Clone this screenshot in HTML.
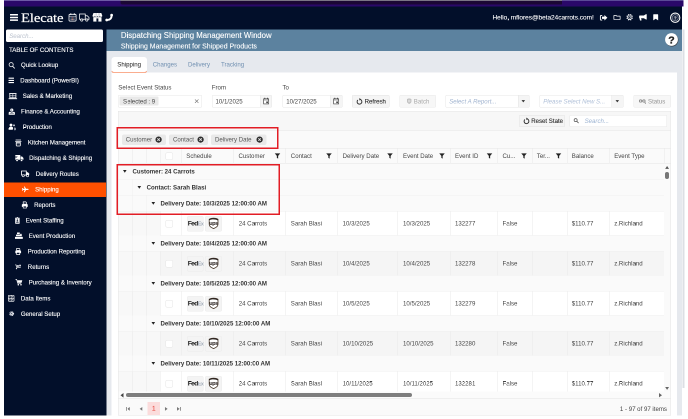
<!DOCTYPE html>
<html lang="en">
<head>
<meta charset="utf-8">
<title>Dispatching Shipping Management Window</title>
<style>
*{box-sizing:border-box;margin:0;padding:0}
html,body{width:688px;height:419px;overflow:hidden;background:#fff}
body{position:relative;font-family:"Liberation Sans",sans-serif;font-size:6.1px;color:#333;line-height:1}
#wrap{position:absolute;left:0;top:0;width:688px;height:419px;zoom:2;transform:scale(.5);transform-origin:0 0;will-change:transform;overflow:hidden;background:#fff}
.abs{position:absolute}
svg{overflow:visible}
.t{position:absolute;white-space:pre;line-height:1;transform:translateY(-50%)}
#logo{font-family:"Liberation Serif","DejaVu Serif",serif;font-size:13px;letter-spacing:-0.1px;color:#fff;-webkit-text-stroke:0.18px #fff;transform:translateY(-50%) scaleX(1.13);transform-origin:0 50%}
.nav{color:#fff;font-size:6.1px;-webkit-text-stroke:0.12px #fff}
.tab{font-size:6.1px;color:#6f8fb0}
.lbl{font-size:6.1px;color:#444}
.inp{position:absolute;background:#fff;border:0.5px solid #e6e6e6;border-radius:1px}
.btn{position:absolute;background:#f5f5f5;border:0.5px solid #e3e3e3;border-radius:1.2px}
.chip{position:absolute;background:#e9e9e9;border-radius:2px}
.hdr{font-size:6.1px;color:#444}
.cell{font-size:6.1px;color:#444}
.grp{font-size:6.1px;font-weight:bold;color:#333}
.vl{position:absolute;width:0.5px;background:#e8e8e8}
</style>
</head>
<body>
<div id="wrap">
<div class="abs" style="left:4.00px;top:0.00px;width:679.60px;height:6.60px;background:#2a0869"></div>
<div class="abs" style="left:120.40px;top:0.00px;width:441.60px;height:4.40px;background:#1b0734;border-radius:0 0 0 2px"></div>
<div class="abs" style="left:4.00px;top:0.00px;width:116.40px;height:0.80px;background:#6d5aa6"></div>
<div class="abs" style="left:120.40px;top:0.00px;width:441.60px;height:0.90px;background:#7b7585"></div>
<div class="abs" style="left:562.00px;top:0.00px;width:121.60px;height:0.80px;background:#5a4a96"></div>
<div class="abs" style="left:4.00px;top:6.50px;width:678.20px;height:23.00px;background:#020f2a"></div>
<div class="abs" style="left:4.00px;top:29.50px;width:102.60px;height:386.20px;background:#020f2a"></div>
<div class="abs" style="left:106.60px;top:29.50px;width:575.60px;height:386.20px;background:#e6e9ee"></div>
<div class="abs" style="left:106.60px;top:29.50px;width:575.60px;height:21.30px;background:#5c829f"></div>
<div class="abs" style="left:682.60px;top:29.50px;width:1.80px;height:358.50px;background:#dcdfe4"></div>
<svg class="abs" style="left:10.00px;top:14.00px" width="8" height="6.9" viewBox="0 0 8 6.9"><rect x="0" y="0" width="8" height="1.5" rx=".3" fill="#fff"/><rect x="0" y="2.7" width="8" height="1.500" rx=".3" fill="#fff"/><rect x="0" y="5.4" width="8" height="1.500" rx=".3" fill="#fff"/></svg>
<div class="t" id="logo" style="left:20.8px;top:18.2px">Elecate</div>
<svg class="abs" style="left:68.30px;top:13.10px" width="8.1" height="8.6" viewBox="0 0 16 17"><rect x="1" y="2.600" width="14" height="13.400" rx="1.800" fill="none" stroke="#fff" stroke-width="1.500"/><path d="M1 6.400h14" stroke="#e6e8ee" stroke-width="1.100"/><path d="M4.600 0.400v3.600M11.400 0.400v3.600" stroke="#fff" stroke-width="1.600"/><path d="M4 8.800h2.400v2.200h-2.400zM9.600 8.800h2.400v2.200h-2.400zM4 12h2.400v2.200h-2.400zM9.600 12h2.400v2.200h-2.400z" fill="#aab0c0"/><path d="M6.800 8.800h2.400v2.200h-2.400zM6.800 12h2.400v2.200h-2.400z" fill="#d98a7a"/></svg>
<svg class="abs" style="left:79.00px;top:13.40px" width="10.5" height="8.3" viewBox="0 0 21 16.600"><path d="M1 1h11.500v10.500h-11.500z" fill="none" stroke="#fff" stroke-width="1.500"/><path d="M12.500 4.500h4l3.500 3.600v3.400h-7.500" fill="none" stroke="#fff" stroke-width="1.500"/><circle cx="5.500" cy="13" r="2.300" fill="#020f2a" stroke="#fff" stroke-width="1.400"/><circle cx="15.600" cy="13" r="2.300" fill="#020f2a" stroke="#fff" stroke-width="1.400"/></svg>
<svg class="abs" style="left:92.30px;top:13.10px" width="9.8" height="8.6" viewBox="0 0 20 17.500"><path d="M2 0h16l2 5.500c0 1.500-1.200 2.300-2.500 2.300s-2.500-.8-2.500-2.300c0 1.500-1.200 2.300-2.500 2.300s-2.500-.8-2.500-2.300c0 1.500-1.200 2.300-2.500 2.300s-2.500-.8-2.500-2.300c0 1.500-1.200 2.300-2.500 2.300s-2.500-.8-2.500-2.300z" fill="#fff"/><path d="M1.600 8.500h16.800v9h-16.800z" fill="#fff"/><path d="M8 11h4v6.500h-4z" fill="#020f2a"/><path d="M5.200 0v5.500M8.400 0v5.500M11.600 0v5.500M14.800 0v5.500" stroke="#9aa0b2" stroke-width=".8"/></svg>
<svg class="abs" style="left:104.90px;top:13.40px" width="8.3" height="8.1" viewBox="0 0 16 16"><path d="M12.700 3.300C13.400 9.400 9.400 13.400 3.300 12.700" fill="none" stroke="#fff" stroke-width="3.800" stroke-linecap="round"/><circle cx="12.900" cy="3.200" r="2.700" fill="#fff"/><circle cx="3.200" cy="12.900" r="2.700" fill="#fff"/></svg>
<div class="t" style="left:492.5px;top:17.7px;font-size:6.46px;color:#fff;-webkit-text-stroke:0.1px #fff">Hello, mflores@beta24carrots.com!</div>
<svg class="abs" style="left:600.00px;top:14.90px" width="7.4" height="5.5" viewBox="0 0 14.800 11"><path d="M4.400 0.900h-2.400c-.7 0-1.200.5-1.200 1.200v6.800c0 .7.500 1.200 1.200 1.200h2.400" fill="none" stroke="#fff" stroke-width="1.800"/><path d="M8.800 0l6 5.500-6 5.500v-3.200h-4.800v-4.600h4.800z" fill="#fff"/></svg>
<svg class="abs" style="left:613.50px;top:15.10px" width="7" height="4.9" viewBox="0 0 15 10.500"><path d="M0.800 1.500c0-.4.300-.7.700-.7h4l1.500 1.600h6.500c.4 0 .7.300.7.700v6c0 .4-.3.700-.7.700h-12c-.4 0-.7-.3-.7-.700z" fill="none" stroke="#fff" stroke-width="1.500"/></svg>
<svg class="abs" style="left:626.10px;top:14.20px" width="7.3" height="6.5" viewBox="0 0 14.600 13"><path d="M11.55 8.26L13.40 9.03M9.06 10.75L9.83 12.60M5.54 10.75L4.77 12.60M3.05 8.26L1.20 9.03M3.05 4.74L1.20 3.97M5.54 2.25L4.77 0.40M9.06 2.25L9.83 0.40M11.55 4.74L13.40 3.97" stroke="#e4e6ec" stroke-width="2.300"/><circle cx="7.300" cy="6.500" r="4.500" fill="#020f2a" stroke="#fff" stroke-width="1.300"/><circle cx="7.300" cy="6.500" r="2" fill="none" stroke="#e8eaf0" stroke-width="1.100"/></svg>
<svg class="abs" style="left:639.00px;top:14.20px" width="8.4" height="6.7" viewBox="0 0 16.500 13.500"><path d="M14 0.300c.6-.4 1.300 0 1.300.700v9.500c0 .7-.7 1.100-1.300.7l-4.500-2.700h-5.500l.9 3.700c.1.500-.2.900-.7.900h-1.700c-.4 0-.7-.2-.8-.6l-1-4.200c-.5-.3-.7-.800-.7-1.300v-2.500c0-.8.600-1.500 1.500-1.500h8z" fill="#fff"/></svg>
<svg class="abs" style="left:653.10px;top:14.00px" width="5.4" height="6.7" viewBox="0 0 11 12.400"><path d="M0.500 1.200c0-.7.500-1.200 1.200-1.200h7.600c.7 0 1.200.5 1.200 1.200v11.200l-5-3.300-5 3.300z" fill="#fff"/></svg>
<svg class="abs" style="left:669.90px;top:12.30px" width="10.4" height="10.4" viewBox="0 0 20.800 20.800"><circle cx="10.400" cy="10.400" r="9.300" fill="none" stroke="#fff" stroke-width="2.100"/><circle cx="10.400" cy="10.400" r="6.200" fill="#1a2540" stroke="#d8dbe3" stroke-width=".9"/><text x="10.400" y="13.700" text-anchor="middle" font-family="Liberation Sans, sans-serif" font-weight="bold" font-size="9" fill="#fff">?</text></svg>
<svg class="abs" style="left:664.80px;top:32.80px" width="13" height="13" viewBox="0 0 26 26"><circle cx="13.900" cy="14.100" r="12.800" fill="#2a2320" opacity=".75"/><circle cx="13" cy="13" r="12.800" fill="#fff"/><text x="13" y="20.600" text-anchor="middle" font-family="Liberation Sans, sans-serif" font-weight="bold" font-size="21" fill="#222" stroke="#222" stroke-width=".6">?</text></svg>
<div class="abs" style="left:5.80px;top:29.60px;width:97.20px;height:12.40px;background:#fff;border-radius:1.600px"></div>
<div class="t" style="left:9.2px;top:36px;font-size:6.100px;font-style:italic;color:#b9c0cc">Search...</div>
<div class="t nav" style="left:9px;top:50px;font-size:6.120px">TABLE OF CONTENTS</div>
<div class="abs" style="left:4.00px;top:182.40px;width:101.80px;height:14.80px;background:#ff5000"></div>
<div class="t nav" style="left:21px;top:65.2px">Quick Lookup</div>
<div class="t nav" style="left:20.3px;top:80.7px">Dashboard (PowerBI)</div>
<div class="t nav" style="left:22.7px;top:96.2px">Sales &amp; Marketing</div>
<div class="t nav" style="left:21px;top:111.7px">Finance &amp; Accounting</div>
<div class="t nav" style="left:22.7px;top:127.2px">Production</div>
<div class="t nav" style="left:27.9px;top:142.7px">Kitchen Management</div>
<div class="t nav" style="left:29.1px;top:158.2px">Dispatching &amp; Shipping</div>
<div class="t nav" style="left:35.8px;top:173.8px">Delivery Routes</div>
<div class="t nav" style="left:35.1px;top:189.6px">Shipping</div>
<div class="t nav" style="left:34.1px;top:205.1px">Reports</div>
<div class="t nav" style="left:25.8px;top:220.7px">Event Staffing</div>
<div class="t nav" style="left:28.7px;top:236.1px">Event Production</div>
<div class="t nav" style="left:27.8px;top:251.6px">Production Reporting</div>
<div class="t nav" style="left:27.8px;top:267.1px">Returns</div>
<div class="t nav" style="left:28.7px;top:282.6px">Purchasing &amp; Inventory</div>
<div class="t nav" style="left:20.9px;top:298.3px">Data Items</div>
<div class="t nav" style="left:20.9px;top:313.8px">General Setup</div>
<svg class="abs" style="left:8.40px;top:61.80px" width="6.4" height="6.6" viewBox="0 0 13 13.400"><circle cx="5.400" cy="5.400" r="4.200" fill="none" stroke="#fff" stroke-width="1.500"/><path d="M8.500 8.700l3.700 3.900" stroke="#fff" stroke-width="1.700" stroke-linecap="round"/></svg>
<svg class="abs" style="left:8.70px;top:77.70px" width="5.5" height="5.8" viewBox="0 0 11 11.600"><rect x="0" y="0.300" width="11" height="2.200" rx=".4" fill="#fff"/><rect x="0" y="4.700" width="11" height="2.200" rx=".4" fill="#fff"/><rect x="0" y="9.100" width="11" height="2.200" rx=".4" fill="#fff"/></svg>
<svg class="abs" style="left:8.30px;top:92.90px" width="8.7" height="6.3" viewBox="0 0 17.400 12.600"><path d="M1.400 1h14.600" stroke="#fff" stroke-width="1.800"/><path d="M2.600 2v7.600h12.200v-7.600" fill="none" stroke="#fff" stroke-width="1.600"/><path d="M8.700 2v7.600M2.600 5.600h12.200" stroke="#e6e8ee" stroke-width="1.200"/><path d="M0.200 11.400h17" stroke="#fff" stroke-width="1.900"/></svg>
<svg class="abs" style="left:8.50px;top:108.70px" width="6.6" height="6.3" viewBox="0 0 13 12.600"><circle cx="6.500" cy="3.200" r="3.100" fill="#fff"/><path d="M6.500 1.400v3.600" stroke="#5a6480" stroke-width="1"/><path d="M0.300 12.400v-3.800c0-1.400 1.200-2.200 2.600-2.200l3.600 1.800 3.600-1.800c1.400 0 2.600.800 2.600 2.200v3.800z" fill="#fff"/><path d="M2.400 9.400h8.200" stroke="#020f2a" stroke-width=".9"/></svg>
<svg class="abs" style="left:8.50px;top:123.70px" width="8" height="6.8" viewBox="0 0 16 13.600"><circle cx="5" cy="3" r="2.800" fill="#fff"/><path d="M0.200 12.600v-2.400c0-2.100 1.500-3.600 3.500-3.600h2.600c1.600 0 2.700.8 3.200 2l-1 3.600c-.1.200-.2.400-.5.400z" fill="#fff"/><circle cx="11" cy="3.700" r="1.900" fill="#cfd3dc"/><path d="M11.600 7.500v6M14.400 7.800v5.400" stroke="#dfe2ea" stroke-width="1.200"/></svg>
<svg class="abs" style="left:14.90px;top:139.30px" width="6.6" height="7" viewBox="0 0 13 14"><path d="M1.800 1h9.400" stroke="#fff" stroke-width="1.700" stroke-linecap="round"/><path d="M0.800 3.800h11.400" stroke="#fff" stroke-width="1.500" stroke-linecap="round"/><path d="M2.400 6h8.200v5.600c0 .8-.6 1.400-1.400 1.400h-5.400c-.8 0-1.400-.6-1.400-1.400z" fill="none" stroke="#fff" stroke-width="1.600"/><path d="M2.400 8.700h8.200" stroke="#fff" stroke-width="1.100"/></svg>
<svg class="abs" style="left:14.80px;top:154.80px" width="8.6" height="6.8" viewBox="0 0 17 13.600"><path d="M0.500 0.600c0-.3.300-.6.600-.6h8.800c.3 0 .6.300.6.600v8.900h-10z" fill="#fff"/><path d="M11.300 3h2.800l2.700 2.900v3.600h-5.500z" fill="#fff"/><circle cx="4" cy="10.700" r="2.200" fill="#fff" stroke="#020f2a" stroke-width=".9"/><circle cx="13" cy="10.700" r="2.200" fill="#fff" stroke="#020f2a" stroke-width=".9"/><path d="M0 3h5M0 5.400h4" stroke="#020f2a" stroke-width=".9"/></svg>
<svg class="abs" style="left:21.00px;top:170.40px" width="8.6" height="6.6" viewBox="0 0 17 13.200"><path d="M1 1h9.500v8.200h-9.500z" fill="none" stroke="#fff" stroke-width="1.700"/><path d="M10.500 3.500h3.300l2.500 2.800v2.900h-5.800z" fill="#fff"/><circle cx="4.300" cy="10.500" r="2.100" fill="#020f2a" stroke="#fff" stroke-width="1.300"/><circle cx="13" cy="10.500" r="2.100" fill="#020f2a" stroke="#fff" stroke-width="1.300"/></svg>
<svg class="abs" style="left:21.50px;top:186.60px" width="7.2" height="5.8" viewBox="0 0 14.400 11.600"><path d="M14.400 5.800c0 .7-1.400 1.200-2.400 1.200h-2.900l-2.700 4.600h-1.600l1.400-4.600h-2.800l-1.200 1.500h-1.300l.8-2.700-.8-2.700h1.300l1.200 1.500h2.800l-1.400-4.600h1.600l2.700 4.600h2.900c1 0 2.400.5 2.400 1.200z" fill="#fff"/></svg>
<svg class="abs" style="left:21.60px;top:201.50px" width="6.6" height="7" viewBox="0 0 13 14"><path d="M3.300 0.800h5.200l1.400 1.400v3h-6.600z" fill="none" stroke="#fff" stroke-width="1.400"/><path d="M0.600 6.600c0-.8.600-1.400 1.400-1.400h9c.8 0 1.400.6 1.400 1.400v4.200h-11.800z" fill="#fff"/><path d="M3.300 9.200h6.400v4h-6.400z" fill="#020f2a" stroke="#fff" stroke-width="1.300"/></svg>
<svg class="abs" style="left:14.90px;top:217.20px" width="4.8" height="6.8" viewBox="0 0 9.600 13.600"><path d="M0.400 2.200c0-.5.400-.9.900-.9h7c.5 0 .9.400.9.900v10.500c0 .5-.4.900-.9.900h-7c-.5 0-.9-.4-.9-.900z" fill="#fff"/><rect x="3" y="0" width="3.600" height="2.600" rx=".6" fill="#fff" stroke="#020f2a" stroke-width=".7"/><circle cx="4.800" cy="6.200" r="1.500" fill="#020f2a"/><path d="M2.200 11.200c0-1.500 1.100-2.400 2.600-2.400s2.600.9 2.600 2.400z" fill="#020f2a"/></svg>
<svg class="abs" style="left:15.00px;top:232.70px" width="7.8" height="6.4" viewBox="0 0 15.600 12.800"><path d="M4 0h5.500v3.200h-5.500z" fill="#fff"/><path d="M10.300 2.600h3v2.500h-3z" fill="#dfe2ea"/><path d="M2 4.200h11.600v3.300h-11.600z" fill="#fff"/><path d="M0 8.800h15.600v3.600c0 .2-.2.400-.4.400h-14.800c-.2 0-.4-.2-.4-.4z" fill="#fff"/></svg>
<svg class="abs" style="left:15.00px;top:248.10px" width="6.4" height="6.8" viewBox="0 0 13 14"><path d="M3.300 0.800h5.200l1.400 1.400v3h-6.600z" fill="none" stroke="#fff" stroke-width="1.400"/><path d="M0.600 6.600c0-.8.600-1.400 1.400-1.400h9c.8 0 1.400.6 1.400 1.400v4.200h-11.800z" fill="#fff"/><path d="M3.300 9.200h6.400v4h-6.400z" fill="#020f2a" stroke="#fff" stroke-width="1.300"/></svg>
<svg class="abs" style="left:15.20px;top:264.60px" width="6.2" height="4.8" viewBox="0 0 12.400 9.600"><path d="M0 0.800h2.200l1.600 5.600h7.600" fill="none" stroke="#fff" stroke-width="1.300"/><path d="M4.200 1.200h3.400v3.600h-3.400zM8.400 0.400h3.400v3.300h-3.400z" fill="#e6e8ee"/><circle cx="3" cy="8.200" r="1.200" fill="#fff"/></svg>
<svg class="abs" style="left:15.30px;top:279.20px" width="7" height="6.6" viewBox="0 0 14 13.200"><path d="M0 0.900h2.300l2.200 7.600h7" fill="none" stroke="#fff" stroke-width="1.500"/><path d="M3.600 2.400h10l-1.400 5h-7.200z" fill="#fff"/><circle cx="5.600" cy="11.400" r="1.500" fill="#fff"/><circle cx="11" cy="11.400" r="1.500" fill="#fff"/></svg>
<svg class="abs" style="left:8.10px;top:295.00px" width="6.4" height="6.6" viewBox="0 0 12.800 13.200"><rect x=".7" y=".7" width="11.400" height="11.800" rx="1.200" fill="none" stroke="#fff" stroke-width="1.300"/><path d="M6.400 .7v11.800M.7 6.600h11.400" stroke="#fff" stroke-width="1.100"/><circle cx="3.600" cy="3.700" r="1.100" fill="#fff"/><circle cx="9.300" cy="3.700" r="1.100" fill="#fff"/><circle cx="3.600" cy="9.500" r="1.100" fill="#fff"/><circle cx="9.300" cy="9.500" r="1.100" fill="#fff"/></svg>
<svg class="abs" style="left:8.90px;top:311.00px" width="5.4" height="5.4" viewBox="0 0 9.200 9.200"><circle cx="4.600" cy="4.600" r="3" fill="none" stroke="#e6e8ee" stroke-width="2.200" stroke-dasharray="1.600 .8"/><circle cx="4.600" cy="4.600" r="2.200" fill="#e6e8ee"/><circle cx="4.600" cy="4.600" r=".9" fill="#020f2a"/></svg>
<div class="t" style="left:120.9px;top:35.4px;font-size:7.790px;color:#fff;-webkit-text-stroke:0.1px #fff">Dispatching Shipping Management Window</div>
<div class="t" style="left:120.9px;top:46.3px;font-size:6.930px;color:#fff;-webkit-text-stroke:0.1px #fff">Shipping Management for Shipped Products</div>
<div class="abs" style="left:111.60px;top:57.20px;width:35.40px;height:15.70px;background:#fff;border-radius:3px 3px 2.500px 2.500px;border-bottom:1.300px solid #f55a1f"></div>
<div class="t" style="left:117.3px;top:64.6px;font-size:6.100px;color:#222">Shipping</div>
<div class="t tab" style="left:152.7px;top:64.6px">Changes</div>
<div class="t tab" style="left:188px;top:64.6px">Delivery</div>
<div class="t tab" style="left:221px;top:64.6px">Tracking</div>
<div class="abs" style="left:111.60px;top:72.40px;width:565.40px;height:343.30px;background:#fff"></div>
<div class="t lbl" style="left:118.3px;top:87.5px">Select Event Status</div>
<div class="t lbl" style="left:211.8px;top:87.5px">From</div>
<div class="t lbl" style="left:282.5px;top:87.5px">To</div>
<div class="inp" style="left:118.00px;top:95.00px;width:84.00px;height:12.30px;"></div>
<div class="chip" style="left:119.60px;top:96.50px;width:38.80px;height:9.20px;border-radius:1px"></div>
<div class="t cell" style="left:123px;top:101.3px">Selected : 9</div>
<svg class="abs" style="left:194.40px;top:99.20px" width="4.4" height="4.4" viewBox="0 0 10 10"><path d="M1 1L9 9M9 1L1 9" stroke="#666" stroke-width="1.300" fill="none"/></svg>
<div class="inp" style="left:211.80px;top:95.10px;width:60.40px;height:12.30px;"></div>
<div class="abs" style="left:260.20px;top:95.60px;width:11.50px;height:11.30px;background:#f5f5f5;border-left:0.500px solid #e6e6e6"></div>
<div class="t cell" style="left:215.5px;top:101.6px">10/1/2025</div>
<svg class="abs" style="left:262.90px;top:97.60px" width="6.3" height="6.9" viewBox="0 0 12.600 13.800"><path d="M1.300 2.600h10v10.200h-10z" fill="#fff" stroke="#3a3a3a" stroke-width="1.250"/><path d="M1.300 5h10" stroke="#3a3a3a" stroke-width="1"/><path d="M3.600 0.400v2.800M9 0.400v2.800" stroke="#333" stroke-width="1.500"/><rect x="6.600" y="8" width="3.200" height="3.200" fill="#333"/></svg>
<div class="inp" style="left:282.30px;top:95.10px;width:60.40px;height:12.30px;"></div>
<div class="abs" style="left:330.20px;top:95.60px;width:12.00px;height:11.30px;background:#f5f5f5;border-left:0.500px solid #e6e6e6"></div>
<div class="t cell" style="left:286.2px;top:101.6px">10/27/2025</div>
<svg class="abs" style="left:333.10px;top:97.60px" width="6.3" height="6.9" viewBox="0 0 12.600 13.800"><path d="M1.300 2.600h10v10.200h-10z" fill="#fff" stroke="#3a3a3a" stroke-width="1.250"/><path d="M1.300 5h10" stroke="#3a3a3a" stroke-width="1"/><path d="M3.600 0.400v2.800M9 0.400v2.800" stroke="#333" stroke-width="1.500"/><rect x="6.600" y="8" width="3.200" height="3.200" fill="#333"/></svg>
<div class="btn" style="left:352.20px;top:95.00px;width:37.20px;height:12.40px;"></div>
<svg class="abs" style="left:355.80px;top:97.90px" width="7" height="7.2" viewBox="0 0 14 14.400"><path d="M7 2.600a4.800 4.800 0 1 1-3.400 1.400" fill="none" stroke="#333" stroke-width="2"/><path d="M6.600 0v5.200l3.200-2.600z" fill="#333"/></svg>
<div class="t" style="left:364.6px;top:101.4px;font-size:6.100px;color:#2a2a2a;-webkit-text-stroke:0.1px #2a2a2a">Refresh</div>
<div class="btn" style="left:399.30px;top:94.80px;width:36.80px;height:12.80px;background:#f7f7f7;border-color:#e9e9e9"></div>
<div class="t" style="left:413.8px;top:101.4px;font-size:6.100px;color:#a8a8a8">Batch</div>
<svg class="abs" style="left:406.80px;top:98.30px" width="4.4" height="5.4" viewBox="0 0 9 11"><path d="M0.600 1.400C2.800 0.200 6.200 0.200 8.400 1.400V6.400c0 2.200-1.900 3.200-3.900 4.200C2.500 9.600 0.600 8.600 0.600 6.400z" fill="#c8c8c8" stroke="#aaa" stroke-width=".8"/><path d="M2 4h5M2 6h5" stroke="#f3f3f3" stroke-width=".8"/></svg>
<div class="inp" style="left:445.70px;top:95.00px;width:83.70px;height:12.60px;"></div>
<div class="abs" style="left:518.10px;top:95.50px;width:10.80px;height:11.60px;background:#f5f5f5;border-left:0.500px solid #e2e2e2"></div>
<div class="t" style="left:449.2px;top:101.4px;font-size:6.100px;font-style:italic;color:#a0b3cf">Select A Report...</div>
<svg class="abs" style="left:521.60px;top:100.20px" width="3.6" height="2.6" viewBox="0 0 8 5"><path d="M0 0h8l-4 5z" fill="#333"/></svg>
<div class="inp" style="left:539.50px;top:95.00px;width:84.10px;height:12.60px;"></div>
<div class="abs" style="left:611.40px;top:95.50px;width:11.70px;height:11.60px;background:#f5f5f5;border-left:0.500px solid #e2e2e2"></div>
<div class="t" style="left:543.2px;top:101.4px;font-size:6.100px;font-style:italic;color:#b0c0d8">Please Select New S...</div>
<svg class="abs" style="left:615.60px;top:100.20px" width="3.6" height="2.6" viewBox="0 0 8 5"><path d="M0 0h8l-4 5z" fill="#333"/></svg>
<div class="btn" style="left:633.60px;top:94.80px;width:37.20px;height:12.60px;background:#f7f7f7;border-color:#e9e9e9"></div>
<div class="t" style="left:648px;top:101.5px;font-size:6.100px;color:#929292">Status</div>
<svg class="abs" style="left:639.00px;top:99.20px" width="7.4" height="5.4" viewBox="0 0 15 11"><circle cx="3.200" cy="4" r="2.400" fill="none" stroke="#888" stroke-width="1.700"/><circle cx="10" cy="4" r="2.400" fill="none" stroke="#888" stroke-width="1.700"/><path d="M5.200 4h3M11.600 5l1.600 5" stroke="#888" stroke-width="1.700"/></svg>
<div class="abs" style="left:118.00px;top:110.80px;width:552.80px;height:304.60px;background:#fff;border:0.500px solid #e4e4e4"></div>
<div class="abs" style="left:118.50px;top:111.30px;width:551.80px;height:19.50px;background:#f7f7f7;border-bottom:0.500px solid #e6e6e6"></div>
<div class="btn" style="left:519.20px;top:114.90px;width:45.80px;height:12.20px;"></div>
<svg class="abs" style="left:522.80px;top:117.50px" width="7" height="7.2" viewBox="0 0 14 14.400"><path d="M7 2.600a4.800 4.800 0 1 1-3.400 1.400" fill="none" stroke="#333" stroke-width="2"/><path d="M6.600 0v5.200l3.200-2.600z" fill="#333"/></svg>
<div class="t" style="left:531.2px;top:121.1px;font-size:6.100px;color:#2a2a2a;-webkit-text-stroke:0.1px #2a2a2a">Reset State</div>
<div class="inp" style="left:569.50px;top:114.90px;width:97.50px;height:12.20px;"></div>
<svg class="abs" style="left:573.60px;top:118.20px" width="5.6" height="5.6" viewBox="0 0 11 11"><circle cx="4.200" cy="4.200" r="3" fill="none" stroke="#555" stroke-width="1.400"/><path d="M6.400 6.400l3.600 3.600" stroke="#555" stroke-width="1.600"/></svg>
<div class="t" style="left:584.6px;top:121.1px;font-size:6.100px;font-style:italic;color:#9db4d2">Search...</div>
<div class="abs" style="left:118.50px;top:130.80px;width:551.80px;height:17.60px;background:#fafafa;border-bottom:0.500px solid #e6e6e6"></div>
<div class="chip" style="left:122.00px;top:134.40px;width:44.00px;height:10.50px;"></div>
<div class="t cell" style="left:125.7px;top:139.7px;color:#555">Customer</div>
<svg class="abs" style="left:155.70px;top:136.50px" width="6.2" height="6.2" viewBox="0 0 12 12"><circle cx="6" cy="6" r="6" fill="#2e2e2e"/><path d="M3.600 3.600l4.800 4.800M8.400 3.600l-4.800 4.800" stroke="#e6e6e6" stroke-width="1.700"/></svg>
<div class="chip" style="left:169.20px;top:134.40px;width:38.80px;height:10.50px;"></div>
<div class="t cell" style="left:173px;top:139.7px;color:#555">Contact</div>
<svg class="abs" style="left:197.70px;top:136.50px" width="6.2" height="6.2" viewBox="0 0 12 12"><circle cx="6" cy="6" r="6" fill="#2e2e2e"/><path d="M3.600 3.600l4.800 4.800M8.400 3.600l-4.800 4.800" stroke="#e6e6e6" stroke-width="1.700"/></svg>
<div class="chip" style="left:211.00px;top:134.40px;width:55.60px;height:10.50px;"></div>
<div class="t cell" style="left:215px;top:139.7px;color:#555">Delivery Date</div>
<svg class="abs" style="left:256.30px;top:136.50px" width="6.2" height="6.2" viewBox="0 0 12 12"><circle cx="6" cy="6" r="6" fill="#2e2e2e"/><path d="M3.600 3.600l4.800 4.800M8.400 3.600l-4.800 4.800" stroke="#e6e6e6" stroke-width="1.700"/></svg>
<div class="abs" style="left:118.50px;top:148.40px;width:551.80px;height:15.10px;background:#fafafa;border-bottom:0.500px solid #e4e4e4"></div>
<div class="vl" style="left:132.20px;top:148.40px;width:0.50px;height:15.10px;"></div>
<div class="vl" style="left:146.60px;top:148.40px;width:0.50px;height:15.10px;"></div>
<div class="vl" style="left:160.20px;top:148.40px;width:0.50px;height:15.10px;"></div>
<div class="vl" style="left:181.20px;top:148.40px;width:0.50px;height:15.10px;"></div>
<div class="vl" style="left:233.30px;top:148.40px;width:0.50px;height:15.10px;"></div>
<div class="vl" style="left:285.40px;top:148.40px;width:0.50px;height:15.10px;"></div>
<div class="vl" style="left:337.40px;top:148.40px;width:0.50px;height:15.10px;"></div>
<div class="vl" style="left:397.30px;top:148.40px;width:0.50px;height:15.10px;"></div>
<div class="vl" style="left:449.90px;top:148.40px;width:0.50px;height:15.10px;"></div>
<div class="vl" style="left:497.60px;top:148.40px;width:0.50px;height:15.10px;"></div>
<div class="vl" style="left:531.80px;top:148.40px;width:0.50px;height:15.10px;"></div>
<div class="vl" style="left:566.80px;top:148.40px;width:0.50px;height:15.10px;"></div>
<div class="vl" style="left:609.30px;top:148.40px;width:0.50px;height:15.10px;"></div>
<div class="vl" style="left:664.20px;top:148.40px;width:0.50px;height:15.10px;"></div>
<div class="t hdr" style="left:186.3px;top:156px">Schedule</div>
<div class="t hdr" style="left:238.5px;top:156px">Customer</div>
<svg class="abs" style="left:274.60px;top:153.00px" width="6" height="6" viewBox="0 0 12 12"><path d="M0.500 0.800h11l-4.200 5v5.400l-2.600-1.400v-4z" fill="#222"/></svg>
<div class="t hdr" style="left:290.8px;top:156px">Contact</div>
<svg class="abs" style="left:326.20px;top:153.00px" width="6" height="6" viewBox="0 0 12 12"><path d="M0.500 0.800h11l-4.200 5v5.400l-2.600-1.400v-4z" fill="#222"/></svg>
<div class="t hdr" style="left:342.6px;top:156px">Delivery Date</div>
<svg class="abs" style="left:387.00px;top:153.00px" width="6" height="6" viewBox="0 0 12 12"><path d="M0.500 0.800h11l-4.200 5v5.400l-2.600-1.400v-4z" fill="#222"/></svg>
<div class="t hdr" style="left:403px;top:156px">Event Date</div>
<svg class="abs" style="left:438.90px;top:153.00px" width="6" height="6" viewBox="0 0 12 12"><path d="M0.500 0.800h11l-4.200 5v5.400l-2.600-1.400v-4z" fill="#222"/></svg>
<div class="t hdr" style="left:455px;top:156px">Event ID</div>
<svg class="abs" style="left:486.60px;top:153.00px" width="6" height="6" viewBox="0 0 12 12"><path d="M0.500 0.800h11l-4.200 5v5.400l-2.600-1.400v-4z" fill="#222"/></svg>
<div class="t hdr" style="left:502.5px;top:156px">Cu...</div>
<svg class="abs" style="left:521.00px;top:153.00px" width="6" height="6" viewBox="0 0 12 12"><path d="M0.500 0.800h11l-4.200 5v5.400l-2.600-1.400v-4z" fill="#222"/></svg>
<div class="t hdr" style="left:536.8px;top:156px">Ter...</div>
<svg class="abs" style="left:555.60px;top:153.00px" width="6" height="6" viewBox="0 0 12 12"><path d="M0.500 0.800h11l-4.200 5v5.400l-2.600-1.400v-4z" fill="#222"/></svg>
<div class="t hdr" style="left:571.8px;top:156px">Balance</div>
<div class="t hdr" style="left:614.2px;top:156px">Event Type</div>
<div class="abs" style="left:165.40px;top:152.30px;width:7.60px;height:7.60px;background:#fff;border:0.500px solid #e4e4e4;border-radius:1.500px"></div>
<div class="abs" style="left:118.50px;top:163.50px;width:545.70px;height:16.00px;background:#fafafa;border-bottom:0.500px solid #efefef"></div>
<svg class="abs" style="left:123.20px;top:170.10px" width="3.6" height="2.8" viewBox="0 0 8 6"><path d="M0 0h8l-4 6z" fill="#222"/></svg>
<div class="t grp" style="left:132.5px;top:171.4px">Customer: 24 Carrots</div>
<div class="abs" style="left:118.50px;top:179.50px;width:545.70px;height:16.00px;background:#fafafa;border-bottom:0.500px solid #efefef"></div>
<svg class="abs" style="left:137.50px;top:186.10px" width="3.6" height="2.8" viewBox="0 0 8 6"><path d="M0 0h8l-4 6z" fill="#222"/></svg>
<div class="t grp" style="left:146.6px;top:187.4px">Contact: Sarah Blasi</div>
<div class="vl" style="left:132.20px;top:179.50px;width:0.50px;height:16.00px;background:#efefef"></div>
<div class="abs" style="left:118.50px;top:195.50px;width:545.70px;height:16.00px;background:#fafafa;border-bottom:0.500px solid #efefef"></div>
<svg class="abs" style="left:151.60px;top:202.10px" width="3.6" height="2.8" viewBox="0 0 8 6"><path d="M0 0h8l-4 6z" fill="#222"/></svg>
<div class="t grp" style="left:160.5px;top:203.4px">Delivery Date: 10/3/2025 12:00:00 AM</div>
<div class="vl" style="left:132.20px;top:195.50px;width:0.50px;height:16.00px;background:#efefef"></div>
<div class="vl" style="left:146.60px;top:195.50px;width:0.50px;height:16.00px;background:#efefef"></div>
<div class="abs" style="left:118.50px;top:211.50px;width:41.70px;height:24.00px;background:#f8f8f8"></div>
<div class="abs" style="left:160.20px;top:211.50px;width:504.00px;height:24.00px;background:#fff;border-bottom:0.500px solid #efefef"></div>
<div class="vl" style="left:132.20px;top:211.50px;width:0.50px;height:24.00px;"></div>
<div class="vl" style="left:146.60px;top:211.50px;width:0.50px;height:24.00px;"></div>
<div class="vl" style="left:160.20px;top:211.50px;width:0.50px;height:24.00px;"></div>
<div class="vl" style="left:181.20px;top:211.50px;width:0.50px;height:24.00px;"></div>
<div class="vl" style="left:233.30px;top:211.50px;width:0.50px;height:24.00px;"></div>
<div class="vl" style="left:285.40px;top:211.50px;width:0.50px;height:24.00px;"></div>
<div class="vl" style="left:337.40px;top:211.50px;width:0.50px;height:24.00px;"></div>
<div class="vl" style="left:397.30px;top:211.50px;width:0.50px;height:24.00px;"></div>
<div class="vl" style="left:449.90px;top:211.50px;width:0.50px;height:24.00px;"></div>
<div class="vl" style="left:497.60px;top:211.50px;width:0.50px;height:24.00px;"></div>
<div class="vl" style="left:531.80px;top:211.50px;width:0.50px;height:24.00px;"></div>
<div class="vl" style="left:566.80px;top:211.50px;width:0.50px;height:24.00px;"></div>
<div class="vl" style="left:609.30px;top:211.50px;width:0.50px;height:24.00px;"></div>
<div class="abs" style="left:165.40px;top:220.00px;width:7.60px;height:7.60px;background:#fff;border:0.500px solid #e4e4e4;border-radius:1.500px"></div>
<div class="btn" style="left:187.00px;top:215.90px;width:16.60px;height:15.80px;background:#f4f4f4;border-color:#ebebeb;border-radius:1.600px"></div>
<div class="t" style="left:187.7px;top:223.6px;font-size:6.600px;font-weight:bold;color:#1c1c1c;letter-spacing:-0.550px">Fed<span style="color:#a3adba;font-size:5.400px">Ex</span></div>
<div class="btn" style="left:205.20px;top:215.90px;width:16.60px;height:15.80px;background:#f4f4f4;border-color:#ebebeb;border-radius:1.600px"></div>
<svg class="abs" style="left:208.70px;top:217.50px" width="10.2" height="11.6" viewBox="0 0 20.400 23.200"><path d="M1.400 3.400C6 0.600 14.400 0.600 19 3.400V13.400c0 4.600-4.400 6.600-8.800 8.800C5.800 20 1.400 18 1.400 13.400z" fill="#fff" stroke="#4a3a2c" stroke-width="1.600"/><path d="M1.400 3.400C6 0.600 14.400 0.600 19 3.400V6.200C14 3.200 6.400 3.200 1.400 5.400z" fill="#2a2320"/><text x="10.200" y="15.400" text-anchor="middle" font-family="Liberation Sans, sans-serif" font-weight="bold" font-size="11" letter-spacing="-.7" fill="#2a2320">ups</text></svg>
<div class="t cell" style="left:238.7px;top:223.7px">24 Carrots</div>
<div class="t cell" style="left:290.8px;top:223.7px">Sarah Blasi</div>
<div class="t cell" style="left:342.6px;top:223.7px">10/3/2025</div>
<div class="t cell" style="left:403px;top:223.7px">10/3/2025</div>
<div class="t cell" style="left:455px;top:223.7px">132277</div>
<div class="t cell" style="left:502.5px;top:223.7px">False</div>
<div class="t cell" style="left:571.8px;top:223.7px">$110.77</div>
<div class="t cell" style="left:614.2px;top:223.7px">z.Richland</div>
<div class="abs" style="left:118.50px;top:235.50px;width:545.70px;height:16.00px;background:#fafafa;border-bottom:0.500px solid #efefef"></div>
<svg class="abs" style="left:151.60px;top:242.10px" width="3.6" height="2.8" viewBox="0 0 8 6"><path d="M0 0h8l-4 6z" fill="#222"/></svg>
<div class="t grp" style="left:160.5px;top:243.4px">Delivery Date: 10/4/2025 12:00:00 AM</div>
<div class="vl" style="left:132.20px;top:235.50px;width:0.50px;height:16.00px;background:#efefef"></div>
<div class="vl" style="left:146.60px;top:235.50px;width:0.50px;height:16.00px;background:#efefef"></div>
<div class="abs" style="left:118.50px;top:251.50px;width:41.70px;height:24.00px;background:#f8f8f8"></div>
<div class="abs" style="left:160.20px;top:251.50px;width:504.00px;height:24.00px;background:#f5f5f5;border-bottom:0.500px solid #efefef"></div>
<div class="vl" style="left:132.20px;top:251.50px;width:0.50px;height:24.00px;"></div>
<div class="vl" style="left:146.60px;top:251.50px;width:0.50px;height:24.00px;"></div>
<div class="vl" style="left:160.20px;top:251.50px;width:0.50px;height:24.00px;"></div>
<div class="vl" style="left:181.20px;top:251.50px;width:0.50px;height:24.00px;"></div>
<div class="vl" style="left:233.30px;top:251.50px;width:0.50px;height:24.00px;"></div>
<div class="vl" style="left:285.40px;top:251.50px;width:0.50px;height:24.00px;"></div>
<div class="vl" style="left:337.40px;top:251.50px;width:0.50px;height:24.00px;"></div>
<div class="vl" style="left:397.30px;top:251.50px;width:0.50px;height:24.00px;"></div>
<div class="vl" style="left:449.90px;top:251.50px;width:0.50px;height:24.00px;"></div>
<div class="vl" style="left:497.60px;top:251.50px;width:0.50px;height:24.00px;"></div>
<div class="vl" style="left:531.80px;top:251.50px;width:0.50px;height:24.00px;"></div>
<div class="vl" style="left:566.80px;top:251.50px;width:0.50px;height:24.00px;"></div>
<div class="vl" style="left:609.30px;top:251.50px;width:0.50px;height:24.00px;"></div>
<div class="abs" style="left:165.40px;top:260.00px;width:7.60px;height:7.60px;background:#fff;border:0.500px solid #e4e4e4;border-radius:1.500px"></div>
<div class="btn" style="left:187.00px;top:255.90px;width:16.60px;height:15.80px;background:#f4f4f4;border-color:#ebebeb;border-radius:1.600px"></div>
<div class="t" style="left:187.7px;top:263.6px;font-size:6.600px;font-weight:bold;color:#1c1c1c;letter-spacing:-0.550px">Fed<span style="color:#a3adba;font-size:5.400px">Ex</span></div>
<div class="btn" style="left:205.20px;top:255.90px;width:16.60px;height:15.80px;background:#f4f4f4;border-color:#ebebeb;border-radius:1.600px"></div>
<svg class="abs" style="left:208.70px;top:257.50px" width="10.2" height="11.6" viewBox="0 0 20.400 23.200"><path d="M1.400 3.400C6 0.600 14.400 0.600 19 3.400V13.400c0 4.600-4.400 6.600-8.800 8.800C5.800 20 1.400 18 1.400 13.400z" fill="#fff" stroke="#4a3a2c" stroke-width="1.600"/><path d="M1.400 3.400C6 0.600 14.400 0.600 19 3.400V6.200C14 3.200 6.400 3.200 1.400 5.400z" fill="#2a2320"/><text x="10.200" y="15.400" text-anchor="middle" font-family="Liberation Sans, sans-serif" font-weight="bold" font-size="11" letter-spacing="-.7" fill="#2a2320">ups</text></svg>
<div class="t cell" style="left:238.7px;top:263.7px">24 Carrots</div>
<div class="t cell" style="left:290.8px;top:263.7px">Sarah Blasi</div>
<div class="t cell" style="left:342.6px;top:263.7px">10/4/2025</div>
<div class="t cell" style="left:403px;top:263.7px">10/4/2025</div>
<div class="t cell" style="left:455px;top:263.7px">132278</div>
<div class="t cell" style="left:502.5px;top:263.7px">False</div>
<div class="t cell" style="left:571.8px;top:263.7px">$110.77</div>
<div class="t cell" style="left:614.2px;top:263.7px">z.Richland</div>
<div class="abs" style="left:118.50px;top:275.50px;width:545.70px;height:16.00px;background:#fafafa;border-bottom:0.500px solid #efefef"></div>
<svg class="abs" style="left:151.60px;top:282.10px" width="3.6" height="2.8" viewBox="0 0 8 6"><path d="M0 0h8l-4 6z" fill="#222"/></svg>
<div class="t grp" style="left:160.5px;top:283.4px">Delivery Date: 10/5/2025 12:00:00 AM</div>
<div class="vl" style="left:132.20px;top:275.50px;width:0.50px;height:16.00px;background:#efefef"></div>
<div class="vl" style="left:146.60px;top:275.50px;width:0.50px;height:16.00px;background:#efefef"></div>
<div class="abs" style="left:118.50px;top:291.50px;width:41.70px;height:24.00px;background:#f8f8f8"></div>
<div class="abs" style="left:160.20px;top:291.50px;width:504.00px;height:24.00px;background:#fff;border-bottom:0.500px solid #efefef"></div>
<div class="vl" style="left:132.20px;top:291.50px;width:0.50px;height:24.00px;"></div>
<div class="vl" style="left:146.60px;top:291.50px;width:0.50px;height:24.00px;"></div>
<div class="vl" style="left:160.20px;top:291.50px;width:0.50px;height:24.00px;"></div>
<div class="vl" style="left:181.20px;top:291.50px;width:0.50px;height:24.00px;"></div>
<div class="vl" style="left:233.30px;top:291.50px;width:0.50px;height:24.00px;"></div>
<div class="vl" style="left:285.40px;top:291.50px;width:0.50px;height:24.00px;"></div>
<div class="vl" style="left:337.40px;top:291.50px;width:0.50px;height:24.00px;"></div>
<div class="vl" style="left:397.30px;top:291.50px;width:0.50px;height:24.00px;"></div>
<div class="vl" style="left:449.90px;top:291.50px;width:0.50px;height:24.00px;"></div>
<div class="vl" style="left:497.60px;top:291.50px;width:0.50px;height:24.00px;"></div>
<div class="vl" style="left:531.80px;top:291.50px;width:0.50px;height:24.00px;"></div>
<div class="vl" style="left:566.80px;top:291.50px;width:0.50px;height:24.00px;"></div>
<div class="vl" style="left:609.30px;top:291.50px;width:0.50px;height:24.00px;"></div>
<div class="abs" style="left:165.40px;top:300.00px;width:7.60px;height:7.60px;background:#fff;border:0.500px solid #e4e4e4;border-radius:1.500px"></div>
<div class="btn" style="left:187.00px;top:295.90px;width:16.60px;height:15.80px;background:#f4f4f4;border-color:#ebebeb;border-radius:1.600px"></div>
<div class="t" style="left:187.7px;top:303.6px;font-size:6.600px;font-weight:bold;color:#1c1c1c;letter-spacing:-0.550px">Fed<span style="color:#a3adba;font-size:5.400px">Ex</span></div>
<div class="btn" style="left:205.20px;top:295.90px;width:16.60px;height:15.80px;background:#f4f4f4;border-color:#ebebeb;border-radius:1.600px"></div>
<svg class="abs" style="left:208.70px;top:297.50px" width="10.2" height="11.6" viewBox="0 0 20.400 23.200"><path d="M1.400 3.400C6 0.600 14.400 0.600 19 3.400V13.400c0 4.600-4.400 6.600-8.800 8.800C5.800 20 1.400 18 1.400 13.400z" fill="#fff" stroke="#4a3a2c" stroke-width="1.600"/><path d="M1.400 3.400C6 0.600 14.400 0.600 19 3.400V6.200C14 3.200 6.400 3.200 1.400 5.400z" fill="#2a2320"/><text x="10.200" y="15.400" text-anchor="middle" font-family="Liberation Sans, sans-serif" font-weight="bold" font-size="11" letter-spacing="-.7" fill="#2a2320">ups</text></svg>
<div class="t cell" style="left:238.7px;top:303.7px">24 Carrots</div>
<div class="t cell" style="left:290.8px;top:303.7px">Sarah Blasi</div>
<div class="t cell" style="left:342.6px;top:303.7px">10/5/2025</div>
<div class="t cell" style="left:403px;top:303.7px">10/5/2025</div>
<div class="t cell" style="left:455px;top:303.7px">132279</div>
<div class="t cell" style="left:502.5px;top:303.7px">False</div>
<div class="t cell" style="left:571.8px;top:303.7px">$110.77</div>
<div class="t cell" style="left:614.2px;top:303.7px">z.Richland</div>
<div class="abs" style="left:118.50px;top:315.50px;width:545.70px;height:16.00px;background:#fafafa;border-bottom:0.500px solid #efefef"></div>
<svg class="abs" style="left:151.60px;top:322.10px" width="3.6" height="2.8" viewBox="0 0 8 6"><path d="M0 0h8l-4 6z" fill="#222"/></svg>
<div class="t grp" style="left:160.5px;top:323.4px">Delivery Date: 10/10/2025 12:00:00 AM</div>
<div class="vl" style="left:132.20px;top:315.50px;width:0.50px;height:16.00px;background:#efefef"></div>
<div class="vl" style="left:146.60px;top:315.50px;width:0.50px;height:16.00px;background:#efefef"></div>
<div class="abs" style="left:118.50px;top:331.50px;width:41.70px;height:24.00px;background:#f8f8f8"></div>
<div class="abs" style="left:160.20px;top:331.50px;width:504.00px;height:24.00px;background:#f5f5f5;border-bottom:0.500px solid #efefef"></div>
<div class="vl" style="left:132.20px;top:331.50px;width:0.50px;height:24.00px;"></div>
<div class="vl" style="left:146.60px;top:331.50px;width:0.50px;height:24.00px;"></div>
<div class="vl" style="left:160.20px;top:331.50px;width:0.50px;height:24.00px;"></div>
<div class="vl" style="left:181.20px;top:331.50px;width:0.50px;height:24.00px;"></div>
<div class="vl" style="left:233.30px;top:331.50px;width:0.50px;height:24.00px;"></div>
<div class="vl" style="left:285.40px;top:331.50px;width:0.50px;height:24.00px;"></div>
<div class="vl" style="left:337.40px;top:331.50px;width:0.50px;height:24.00px;"></div>
<div class="vl" style="left:397.30px;top:331.50px;width:0.50px;height:24.00px;"></div>
<div class="vl" style="left:449.90px;top:331.50px;width:0.50px;height:24.00px;"></div>
<div class="vl" style="left:497.60px;top:331.50px;width:0.50px;height:24.00px;"></div>
<div class="vl" style="left:531.80px;top:331.50px;width:0.50px;height:24.00px;"></div>
<div class="vl" style="left:566.80px;top:331.50px;width:0.50px;height:24.00px;"></div>
<div class="vl" style="left:609.30px;top:331.50px;width:0.50px;height:24.00px;"></div>
<div class="abs" style="left:165.40px;top:340.00px;width:7.60px;height:7.60px;background:#fff;border:0.500px solid #e4e4e4;border-radius:1.500px"></div>
<div class="btn" style="left:187.00px;top:335.90px;width:16.60px;height:15.80px;background:#f4f4f4;border-color:#ebebeb;border-radius:1.600px"></div>
<div class="t" style="left:187.7px;top:343.6px;font-size:6.600px;font-weight:bold;color:#1c1c1c;letter-spacing:-0.550px">Fed<span style="color:#a3adba;font-size:5.400px">Ex</span></div>
<div class="btn" style="left:205.20px;top:335.90px;width:16.60px;height:15.80px;background:#f4f4f4;border-color:#ebebeb;border-radius:1.600px"></div>
<svg class="abs" style="left:208.70px;top:337.50px" width="10.2" height="11.6" viewBox="0 0 20.400 23.200"><path d="M1.400 3.400C6 0.600 14.400 0.600 19 3.400V13.400c0 4.600-4.400 6.600-8.800 8.800C5.800 20 1.400 18 1.400 13.400z" fill="#fff" stroke="#4a3a2c" stroke-width="1.600"/><path d="M1.400 3.400C6 0.600 14.400 0.600 19 3.400V6.200C14 3.200 6.400 3.200 1.400 5.400z" fill="#2a2320"/><text x="10.200" y="15.400" text-anchor="middle" font-family="Liberation Sans, sans-serif" font-weight="bold" font-size="11" letter-spacing="-.7" fill="#2a2320">ups</text></svg>
<div class="t cell" style="left:238.7px;top:343.7px">24 Carrots</div>
<div class="t cell" style="left:290.8px;top:343.7px">Sarah Blasi</div>
<div class="t cell" style="left:342.6px;top:343.7px">10/10/2025</div>
<div class="t cell" style="left:403px;top:343.7px">10/10/2025</div>
<div class="t cell" style="left:455px;top:343.7px">132280</div>
<div class="t cell" style="left:502.5px;top:343.7px">False</div>
<div class="t cell" style="left:571.8px;top:343.7px">$110.77</div>
<div class="t cell" style="left:614.2px;top:343.7px">z.Richland</div>
<div class="abs" style="left:118.50px;top:355.50px;width:545.70px;height:16.00px;background:#fafafa;border-bottom:0.500px solid #efefef"></div>
<svg class="abs" style="left:151.60px;top:362.10px" width="3.6" height="2.8" viewBox="0 0 8 6"><path d="M0 0h8l-4 6z" fill="#222"/></svg>
<div class="t grp" style="left:160.5px;top:363.4px">Delivery Date: 10/11/2025 12:00:00 AM</div>
<div class="vl" style="left:132.20px;top:355.50px;width:0.50px;height:16.00px;background:#efefef"></div>
<div class="vl" style="left:146.60px;top:355.50px;width:0.50px;height:16.00px;background:#efefef"></div>
<div class="abs" style="left:118.50px;top:371.50px;width:41.70px;height:24.00px;background:#f8f8f8"></div>
<div class="abs" style="left:160.20px;top:371.50px;width:504.00px;height:24.00px;background:#fff;border-bottom:0.500px solid #efefef"></div>
<div class="vl" style="left:132.20px;top:371.50px;width:0.50px;height:24.00px;"></div>
<div class="vl" style="left:146.60px;top:371.50px;width:0.50px;height:24.00px;"></div>
<div class="vl" style="left:160.20px;top:371.50px;width:0.50px;height:24.00px;"></div>
<div class="vl" style="left:181.20px;top:371.50px;width:0.50px;height:24.00px;"></div>
<div class="vl" style="left:233.30px;top:371.50px;width:0.50px;height:24.00px;"></div>
<div class="vl" style="left:285.40px;top:371.50px;width:0.50px;height:24.00px;"></div>
<div class="vl" style="left:337.40px;top:371.50px;width:0.50px;height:24.00px;"></div>
<div class="vl" style="left:397.30px;top:371.50px;width:0.50px;height:24.00px;"></div>
<div class="vl" style="left:449.90px;top:371.50px;width:0.50px;height:24.00px;"></div>
<div class="vl" style="left:497.60px;top:371.50px;width:0.50px;height:24.00px;"></div>
<div class="vl" style="left:531.80px;top:371.50px;width:0.50px;height:24.00px;"></div>
<div class="vl" style="left:566.80px;top:371.50px;width:0.50px;height:24.00px;"></div>
<div class="vl" style="left:609.30px;top:371.50px;width:0.50px;height:24.00px;"></div>
<div class="abs" style="left:165.40px;top:380.00px;width:7.60px;height:7.60px;background:#fff;border:0.500px solid #e4e4e4;border-radius:1.500px"></div>
<div class="btn" style="left:187.00px;top:375.90px;width:16.60px;height:15.80px;background:#f4f4f4;border-color:#ebebeb;border-radius:1.600px"></div>
<div class="t" style="left:187.7px;top:383.6px;font-size:6.600px;font-weight:bold;color:#1c1c1c;letter-spacing:-0.550px">Fed<span style="color:#a3adba;font-size:5.400px">Ex</span></div>
<div class="btn" style="left:205.20px;top:375.90px;width:16.60px;height:15.80px;background:#f4f4f4;border-color:#ebebeb;border-radius:1.600px"></div>
<svg class="abs" style="left:208.70px;top:377.50px" width="10.2" height="11.6" viewBox="0 0 20.400 23.200"><path d="M1.400 3.400C6 0.600 14.400 0.600 19 3.400V13.400c0 4.600-4.400 6.600-8.800 8.800C5.800 20 1.400 18 1.400 13.400z" fill="#fff" stroke="#4a3a2c" stroke-width="1.600"/><path d="M1.400 3.400C6 0.600 14.400 0.600 19 3.400V6.200C14 3.200 6.400 3.200 1.400 5.400z" fill="#2a2320"/><text x="10.200" y="15.400" text-anchor="middle" font-family="Liberation Sans, sans-serif" font-weight="bold" font-size="11" letter-spacing="-.7" fill="#2a2320">ups</text></svg>
<div class="t cell" style="left:238.7px;top:383.7px">24 Carrots</div>
<div class="t cell" style="left:290.8px;top:383.7px">Sarah Blasi</div>
<div class="t cell" style="left:342.6px;top:383.7px">10/11/2025</div>
<div class="t cell" style="left:403px;top:383.7px">10/11/2025</div>
<div class="t cell" style="left:455px;top:383.7px">132281</div>
<div class="t cell" style="left:502.5px;top:383.7px">False</div>
<div class="t cell" style="left:571.8px;top:383.7px">$110.77</div>
<div class="t cell" style="left:614.2px;top:383.7px">z.Richland</div>
<div class="abs" style="left:664.20px;top:163.50px;width:6.10px;height:229.30px;background:#fafafa"></div>
<svg class="abs" style="left:665.10px;top:166.10px" width="4.2" height="2.9" viewBox="0 0 8 6"><path d="M0 6h8l-4-6z" fill="#555"/></svg>
<div class="abs" style="left:665.10px;top:171.80px;width:4.00px;height:7.20px;border-radius:2px;background:#767676"></div>
<svg class="abs" style="left:665.00px;top:387.10px" width="4.2" height="2.9" viewBox="0 0 8 6"><path d="M0 0h8l-4 6z" fill="#666"/></svg>
<div class="abs" style="left:118.50px;top:391.70px;width:551.80px;height:6.40px;background:#fbfbfb"></div>
<svg class="abs" style="left:120.50px;top:392.90px" width="3" height="4.6" viewBox="0 0 6 9.200"><path d="M6 0v9.200l-6-4.600z" fill="#444"/></svg>
<div class="abs" style="left:126.20px;top:393.10px;width:285.90px;height:4.00px;border-radius:2px;background:#7e7e7e"></div>
<svg class="abs" style="left:659.20px;top:392.80px" width="3" height="4.4" viewBox="0 0 6 8.800"><path d="M0 0v8.800l6-4.400z" fill="#666"/></svg>
<div class="abs" style="left:118.50px;top:398.00px;width:551.80px;height:17.20px;background:#fafafa;border-top:0.500px solid #e4e4e4"></div>
<div class="abs" style="left:147.30px;top:402.00px;width:12.90px;height:12.90px;background:#fbdcdc"></div>
<div class="t" style="left:152px;top:408.7px;font-size:6.300px;color:#e8554c;-webkit-text-stroke:0.15px #e8554c">1</div>
<svg class="abs" style="left:126.20px;top:406.80px" width="3.8" height="3.8" viewBox="0 0 8 8"><path d="M0 0h1.600v8h-1.600z M8 0v8l-5.600-4z" fill="#777"/></svg>
<svg class="abs" style="left:139.00px;top:406.80px" width="3.8" height="3.8" viewBox="0 0 8 8"><path d="M7 0v8l-5.600-4z" fill="#777"/></svg>
<svg class="abs" style="left:164.30px;top:406.80px" width="3.8" height="3.8" viewBox="0 0 8 8"><path d="M1 0v8l5.600-4z" fill="#777"/></svg>
<svg class="abs" style="left:177.10px;top:406.80px" width="3.8" height="3.8" viewBox="0 0 8 8"><path d="M6.400 0h1.600v8h-1.600z M0 0v8l5.600-4z" fill="#777"/></svg>
<div class="t" style="left:619.9px;top:408.8px;font-size:6.100px;color:#444">1 - 97 of 97 items</div>
<div class="abs" style="left:116.60px;top:127.20px;width:161.80px;height:21.80px;border:1.600px solid #e21d25"></div>
<div class="abs" style="left:116.60px;top:164.00px;width:163.30px;height:51.00px;border:1.600px solid #e21d25"></div>
</div>
</body>
</html>
